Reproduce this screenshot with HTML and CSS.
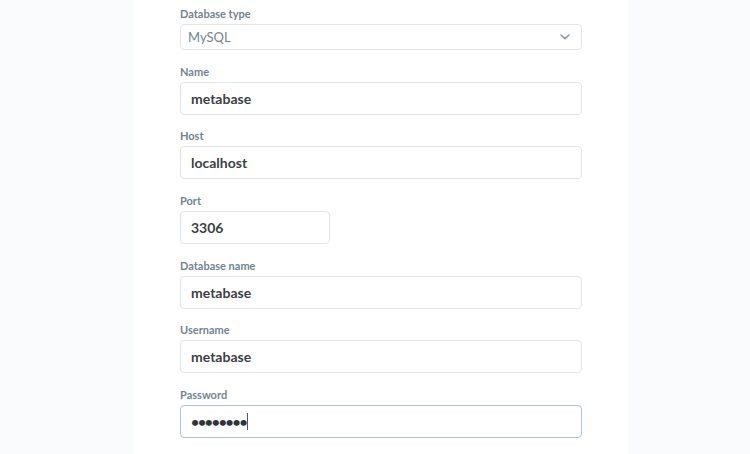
FILE: index.html
```html
<!DOCTYPE html>
<html>
<head>
<meta charset="utf-8">
<link rel="stylesheet" href="styles.css">
</head>
<body>
<div class="page">
  <form class="panel">
    <div class="field first">
      <label class="label">Database type</label>
      <div class="select">
        <span>MySQL</span>
        <svg class="chev" width="10" height="6" viewBox="0 0 10 6"><path d="M1 1l4 3.6L9 1" fill="none" stroke="#8a96a3" stroke-width="1.5" stroke-linecap="round" stroke-linejoin="round"/></svg>
      </div>
    </div>
    <div class="field">
      <label class="label">Name</label>
      <div class="input">metabase</div>
    </div>
    <div class="field">
      <label class="label">Host</label>
      <div class="input">localhost</div>
    </div>
    <div class="field">
      <label class="label">Port</label>
      <div class="input short">3306</div>
    </div>
    <div class="field">
      <label class="label">Database name</label>
      <div class="input">metabase</div>
    </div>
    <div class="field">
      <label class="label">Username</label>
      <div class="input">metabase</div>
    </div>
    <div class="field">
      <label class="label">Password</label>
      <div class="input focus"><span class="dots">••••••••</span><span class="caret"></span></div>
    </div>
  </form>
</div>
</body>
</html>
```
FILE: styles.css
```css
html, body {
  margin: 0;
  padding: 0;
  background: #f9fbfc;
  font-family: Lato, "Open Sans", sans-serif;
}
.page {
  display: flex;
  height: 454px;
  overflow: hidden;
}
.panel {
  margin-left: 133px;
  width: 495px;
  background: #fff;
  padding: 7px 46px 0 47px;
  box-sizing: border-box;
}
.field {
  margin-top: 14.7px;
}
.field.first {
  margin-top: 0;
}
.label {
  display: block;
  font-size: 11px;
  line-height: 14px;
  font-weight: 700;
  color: #74838f;
  margin-bottom: 3px;
}
.select {
  height: 26px;
  box-sizing: border-box;
  border: 1px solid #e2e6ea;
  border-radius: 4px;
  display: flex;
  align-items: center;
  justify-content: space-between;
  padding: 0 11px 0 7px;
  font-size: 13px;
  color: #74838f;
}
.chev {
  display: block;
}
.input {
  height: 33px;
  box-sizing: border-box;
  border: 1px solid #e2e6ea;
  border-radius: 4px;
  display: flex;
  align-items: center;
  padding: 0 10px;
  font-size: 14px;
  font-weight: 700;
  color: #3c4046;
}
.input.short {
  width: 150px;
}
.input.focus {
  border-color: #a9c3d9;
}
.dots {
  font-size: 14px;
  letter-spacing: -1.2px;
  color: #2e353b;
}
.caret {
  display: inline-block;
  width: 1px;
  height: 17px;
  background: #555a60;
  margin-left: 1px;
}
```
